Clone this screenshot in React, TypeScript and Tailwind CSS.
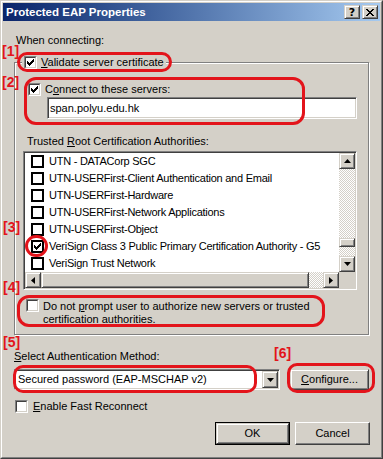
import React from "react";

const FONT = { fontFamily: '"Liberation Sans", Arial, sans-serif' };

function Check() {
  return (
    <svg width="7" height="7" viewBox="0 0 7 7" shapeRendering="crispEdges">
      <path d="M0 2h1v1h1v1h1v-1h1v-1h1v-1h1v-1h1v3h-1v1h-1v1h-1v1h-1v1h-1v-1h-1v-1h-1z" fill="#000" />
    </svg>
  );
}

function Box3D({ checked }: { checked?: boolean }) {
  return (
    <div className="w-[13px] h-[13px] shrink-0 border border-t-[#808080] border-l-[#808080] border-r-white border-b-white">
      <div className="w-full h-full border border-t-[#404040] border-l-[#404040] border-r-[#d4d0c8] border-b-[#d4d0c8] bg-white flex items-center justify-center">
        {checked ? <Check /> : null}
      </div>
    </div>
  );
}

function BoxFlat({ checked }: { checked?: boolean }) {
  return (
    <div className="w-[13px] h-[13px] shrink-0 border-2 border-[#000] bg-white flex items-center justify-center">
      {checked ? <Check /> : null}
    </div>
  );
}

const raised =
  "border border-t-[#d4d0c8] border-l-[#d4d0c8] border-r-[#404040] border-b-[#404040] shadow-[inset_1px_1px_0_#fff,inset_-1px_-1px_0_#808080] bg-[#d4d0c8]";
const sunken =
  "border border-t-[#808080] border-l-[#808080] border-r-white border-b-white shadow-[inset_1px_1px_0_#404040,inset_-1px_-1px_0_#d4d0c8] p-[1px]";
const checker =
  "bg-[image:repeating-conic-gradient(#ffffff_0%_25%,#d4d0c8_0%_50%)] bg-[length:2px_2px]";

function Arrow({ dir }: { dir: "up" | "down" | "left" | "right" }) {
  const paths: Record<string, string> = {
    up: "M3.5 0L7 4H0z",
    down: "M0 0h7L3.5 4z",
    left: "M0 3.5L4 0v7z",
    right: "M0 0l4 3.5L0 7z",
  };
  const horiz = dir === "left" || dir === "right";
  return (
    <svg width={horiz ? 4 : 7} height={horiz ? 7 : 4} viewBox={horiz ? "0 0 4 7" : "0 0 7 4"}>
      <path d={paths[dir]} fill="#000" />
    </svg>
  );
}

function SBtn({ dir, className = "" }: { dir: "up" | "down" | "left" | "right"; className?: string }) {
  return (
    <div className={`w-[16px] h-[16px] shrink-0 flex items-center justify-center ${raised} ${className}`}>
      <Arrow dir={dir} />
    </div>
  );
}

const rows: { t: string; c?: boolean }[] = [
  { t: "UTN - DATACorp SGC" },
  { t: "UTN-USERFirst-Client Authentication and Email" },
  { t: "UTN-USERFirst-Hardware" },
  { t: "UTN-USERFirst-Network Applications" },
  { t: "UTN-USERFirst-Object" },
  { t: "VeriSign Class 3 Public Primary Certification Authority - G5", c: true },
  { t: "VeriSign Trust Network" },
];

export default function App() {
  return (
    <div
      className="relative w-[383px] h-[459px] overflow-hidden bg-[#d4d0c8] text-[11px] leading-[13px] text-black"
      style={FONT}
    >
      {/* window frame */}
      <div className="w-full h-full border border-t-[#d4d0c8] border-l-[#d4d0c8] border-r-[#404040] border-b-[#404040]">
        <div className="w-full h-full border border-t-white border-l-white border-r-[#808080] border-b-[#808080] p-[1px] flex flex-col">
          {/* title bar */}
          <div className="h-[18px] shrink-0 flex items-center pl-[3px] pr-[2px] bg-gradient-to-r from-[#0a246a] to-[#a6caf0]">
            <span className="text-white font-bold text-[11.5px] leading-[14px]">Protected EAP Properties</span>
            <div className="ml-auto flex gap-[2px]">
              <div className={`w-[16px] h-[14px] flex items-center justify-center ${raised}`}>
                <span className="font-bold text-[11px] leading-[11px]" style={{ fontFamily: '"DejaVu Sans", sans-serif' }}>?</span>
              </div>
              <div className={`w-[16px] h-[14px] flex items-center justify-center ${raised}`}>
                <svg width="8" height="7" viewBox="0 0 8 7" shapeRendering="crispEdges">
                  <path d="M0 0h2v1h1v1h2v-1h1v-1h2v1h-1v1h-1v1h-1v1h1v1h1v1h1v1h-2v-1h-1v-1h-2v1h-1v1h-2v-1h1v-1h1v-1h1v-1h-1v-1h-1v-1h-1z" fill="#000" />
                </svg>
              </div>
            </div>
          </div>

          {/* content */}
          <div className="flex flex-col pl-[11px] pr-[10px]">
            <div className="mt-[13px] pl-[2px]">When connecting:</div>

            {/* group box */}
            <div className="mt-[15px] w-[355px] border border-[#808080] shadow-[inset_1px_1px_0_#fff,1px_1px_0_#fff] flex flex-col pb-[8px]">
              <div className="-mt-[7px] ml-[7px] w-fit flex items-center gap-[4px] bg-[#d4d0c8] px-[2px]">
                <Box3D checked />
                <span>
                  <span className="underline">V</span>alidate server certificate
                </span>
              </div>

              <div className="mt-[14px] ml-[13px] flex items-center gap-[4px]">
                <Box3D checked />
                <span>
                  C<span className="underline">o</span>nnect to these servers:
                </span>
              </div>

              <div className={`mt-[1px] ml-[32px] w-[310px] h-[22px] bg-white ${sunken} flex items-center pl-[2px]`}>
                span.polyu.edu.hk
              </div>

              <div className="mt-[16px] ml-[12px]">
                Trusted <span className="underline">R</span>oot Certification Authorities:
              </div>

              {/* list box */}
              <div className={`mt-[3px] ml-[8px] w-[334px] h-[139px] bg-white ${sunken} !p-0`}>
                <div className="m-[1px] flex flex-col h-[135px]">
                  <div className="flex h-[119px]">
                    <div className="flex-1 flex flex-col overflow-hidden">
                      {rows.map((r) => (
                        <div key={r.t} className="h-[17px] shrink-0 flex items-center gap-[5px] pl-[6px] whitespace-nowrap tracking-[-0.25px]">
                          <BoxFlat checked={r.c} />
                          <span>{r.t}</span>
                        </div>
                      ))}
                    </div>
                    <div className="w-[16px] flex flex-col">
                      <SBtn dir="up" />
                      <div className={`flex-1 ${checker} flex flex-col`}>
                        <div className={`mt-[69px] h-[9px] ${raised}`} />
                      </div>
                      <SBtn dir="down" />
                    </div>
                  </div>
                  <div className="flex h-[16px]">
                    <SBtn dir="left" />
                    <div className={`flex-1 ${checker} flex`}>
                      <div className={`w-[268px] h-full ${raised}`} />
                    </div>
                    <SBtn dir="right" />
                    <div className="w-[16px] h-full bg-[#d4d0c8]" />
                  </div>
                </div>
              </div>

              <div className="mt-[9px] ml-[11px] flex items-start gap-[4px]">
                <Box3D />
                <span className="pt-[1px]">
                  Do not <span className="underline">p</span>rompt user to authorize new servers or trusted
                  <br />
                  certification authorities.
                </span>
              </div>
            </div>

            <div className="mt-[15px]">
              <span className="underline">S</span>elect Authentication Method:
            </div>

            <div className="mt-[6px] flex items-start">
              <div className={`w-[266px] h-[21px] bg-white ${sunken} flex items-center`}>
                <span className="pl-[2px] flex-1">Secured password (EAP-MSCHAP v2)</span>
                <div className={`w-[16px] h-full flex items-center justify-center ${raised}`}>
                  <Arrow dir="down" />
                </div>
              </div>
              <div className={`ml-[10px] w-[79px] h-[21px] flex items-center justify-center ${raised}`}>
                <span>
                  <span className="underline">C</span>onfigure...
                </span>
              </div>
            </div>

            <div className="mt-[10px] ml-[1px] flex items-center gap-[5px]">
              <Box3D />
              <span>
                <span className="underline">E</span>nable Fast Reconnect
              </span>
            </div>

            <div className="mt-[9px] flex justify-end gap-[5px]">
              <div className="w-[75px] h-[23px] border border-black">
                <div className={`w-full h-full flex items-center justify-center ${raised}`}>OK</div>
              </div>
              <div className={`w-[75px] h-[23px] flex items-center justify-center border border-t-white border-l-white border-r-[#404040] border-b-[#404040] shadow-[inset_-1px_-1px_0_#808080] bg-[#d4d0c8]`}>
                Cancel
              </div>
            </div>
          </div>
        </div>
      </div>

      {/* red annotations */}
      <div className="absolute left-[17px] top-[52px] w-[155px] h-[20px] border-[3px] border-[#e3141b] rounded-[10px]" />
      <div className="absolute left-[24px] top-[77px] w-[281px] h-[48px] border-[3px] border-[#e3141b] rounded-[12px]" />
      <div className="absolute left-[25px] top-[235px] w-[23px] h-[22px] border-[3px] border-[#e3141b] rounded-full" />
      <div className="absolute left-[17px] top-[295px] w-[308px] h-[32px] border-[3px] border-[#e3141b] rounded-[12px]" />
      <div className="absolute left-[13px] top-[365px] w-[244px] h-[28px] border-[3px] border-[#e3141b] rounded-[10px]" />
      <div className="absolute left-[287px] top-[363px] w-[88px] h-[30px] border-[3px] border-[#e3141b] rounded-[10px]" />

      {[
        { t: "[1]", x: 2, y: 46 },
        { t: "[2]", x: 2, y: 77 },
        { t: "[3]", x: 3, y: 222 },
        { t: "[4]", x: 3, y: 282 },
        { t: "[5]", x: 3, y: 337 },
        { t: "[6]", x: 274, y: 348 },
      ].map((l) => (
        <div
          key={l.t}
          className="absolute text-[14px] leading-[11px] font-bold text-[#e3141b]"
          style={{ left: l.x, top: l.y }}
        >
          {l.t}
        </div>
      ))}
    </div>
  );
}
